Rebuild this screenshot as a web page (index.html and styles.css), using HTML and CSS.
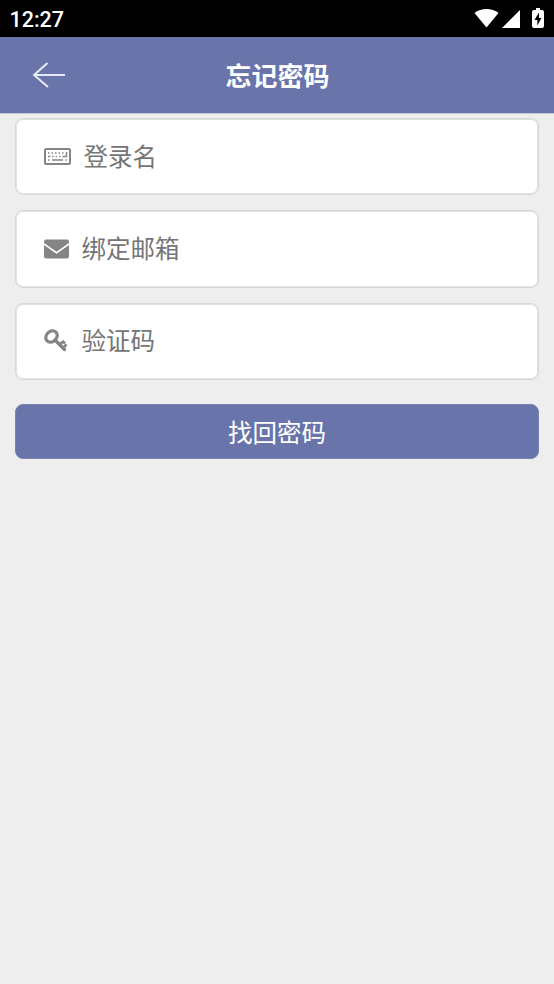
FILE: index.html
```html
<!DOCTYPE html>
<html lang="zh-CN">
<head>
<meta charset="utf-8">
<title>忘记密码</title>
<link rel="stylesheet" href="styles.css">
</head>
<body>
<div class="status">
  <span class="time">12:27</span>
  <svg class="status-icons" width="72" height="22" viewBox="0 0 72 22" fill="#fff">
    <path d="M0.500 5C7-.3 18-.3 24.500 5L12.500 19.500z"/>
    <path d="M46 2V20H28z"/>
    <path fill-rule="evenodd" d="M60 2h2V0h4v2h2q2 0 2 2v14q0 2-2 2h-8q-2 0-2-2V4q0-2 2-2zM65 4.500l-4.500 7.500h2.800v5.500l4.200-7.500h-2.500z"/>
  </svg>
</div>
<header class="header">
  <svg class="back" width="34" height="28" viewBox="0 0 34 28" fill="none" stroke="#e8eaf5" stroke-width="2"><path d="M15.500 2L2 14l14 12M2 14h31"/></svg>
  <h1 class="title">忘记密码</h1>
</header>
<main class="form">
  <label class="field">
    <svg class="keyboard" width="27" height="17" viewBox="0 0 27 17" fill="none" stroke="#858585">
      <rect x="1" y="1" width="25" height="15" rx="1" stroke-width="2"/>
      <path stroke-width="1.500" d="M4 5h1.500m2 0h1.500m2 0h1.500m2 0h1.500m2 0h1.500M22.500 4v5.200M4 8.500h2.500m1.500 0h1.500m2 0h1.500m2 0h1.500m2 0h4.500M4 12h1.500m2.500 0h11m2.500 0h1.500"/>
    </svg>
    <span>登录名</span>
  </label>
  <label class="field">
    <svg class="mail" width="25" height="20" viewBox="0 0 25 20" fill="#858585">
      <path d="M2 .5h21q2 0 2 2v1.500L12.500 12.700 0 4V2.500Q0 .5 2 .5z"/>
      <path d="M0 6l12.500 8.700L25 6v11.500q0 2-2 2H2q-2 0-2-2z"/>
    </svg>
    <span>绑定邮箱</span>
  </label>
  <label class="field">
    <svg class="key" width="25" height="24" viewBox="0 0 25 24" fill="none" stroke="#858585">
      <ellipse cx="7.500" cy="7.500" rx="6.300" ry="5.100" transform="rotate(-45 7.500 7.500)" stroke-width="3.200"/>
      <path stroke-width="3.400" stroke-linecap="round" d="M11 11l9.500 9.500"/>
      <path stroke-width="2.600" d="M15.500 16l3.500-3.500M18.500 12l2.500 2.500M19 19l3.500-3.500"/>
    </svg>
    <span>验证码</span>
  </label>
  <button class="submit" type="button">找回密码</button>
</main>
</body>
</html>
```
FILE: styles.css
```css
* { box-sizing: border-box; }
body {
  margin: 0;
  min-height: 984px;
  background: #eee;
  font-family: "Noto Sans CJK SC", sans-serif;
}
.status {
  height: 37px;
  display: flex;
  align-items: center;
  justify-content: space-between;
  padding: 0 8px 0 9.500px;
  background: #000;
  color: #fff;
}
.time {
  font: 500 21.500px/37px Roboto, sans-serif;
  padding-top: 2px;
}
.status-icons { display: block; margin-top: 0; }
.header {
  height: 77px;
  display: grid;
  grid-template-columns: 66px 1fr 65px;
  align-items: center;
  background: #6874aa;
  border-bottom: 1px solid #c5c7d1;
}
.back { margin-left: 32px; }
.title {
  margin: 0;
  text-align: center;
  color: #fff;
  font-size: 26px;
  font-weight: 700;
  line-height: 38px;
}
.form {
  display: flex;
  flex-direction: column;
  gap: 15px;
  padding: 4px 15px 0;
}
.field {
  height: 77.300px;
  display: flex;
  align-items: center;
  padding-left: 28px;
  background: #fff;
  border: 1px solid #d7d7d7;
  box-shadow: inset 0 0 0 1px #e3e3e3;
  border-radius: 8px;
  color: #757575;
  font-size: 24.500px;
  line-height: 36px;
}
.field svg {
  flex: none;
  margin-right: 12.500px;
}
.field span { margin-top: -2px; }
.submit {
  height: 55px;
  margin-top: 9px;
  padding: 1px 0 0;
  border: 1px solid #7883b4;
  border-radius: 8px;
  background: #6874aa;
  color: #fff;
  font: 24.500px/36px "Noto Sans CJK SC", sans-serif;
}
```
